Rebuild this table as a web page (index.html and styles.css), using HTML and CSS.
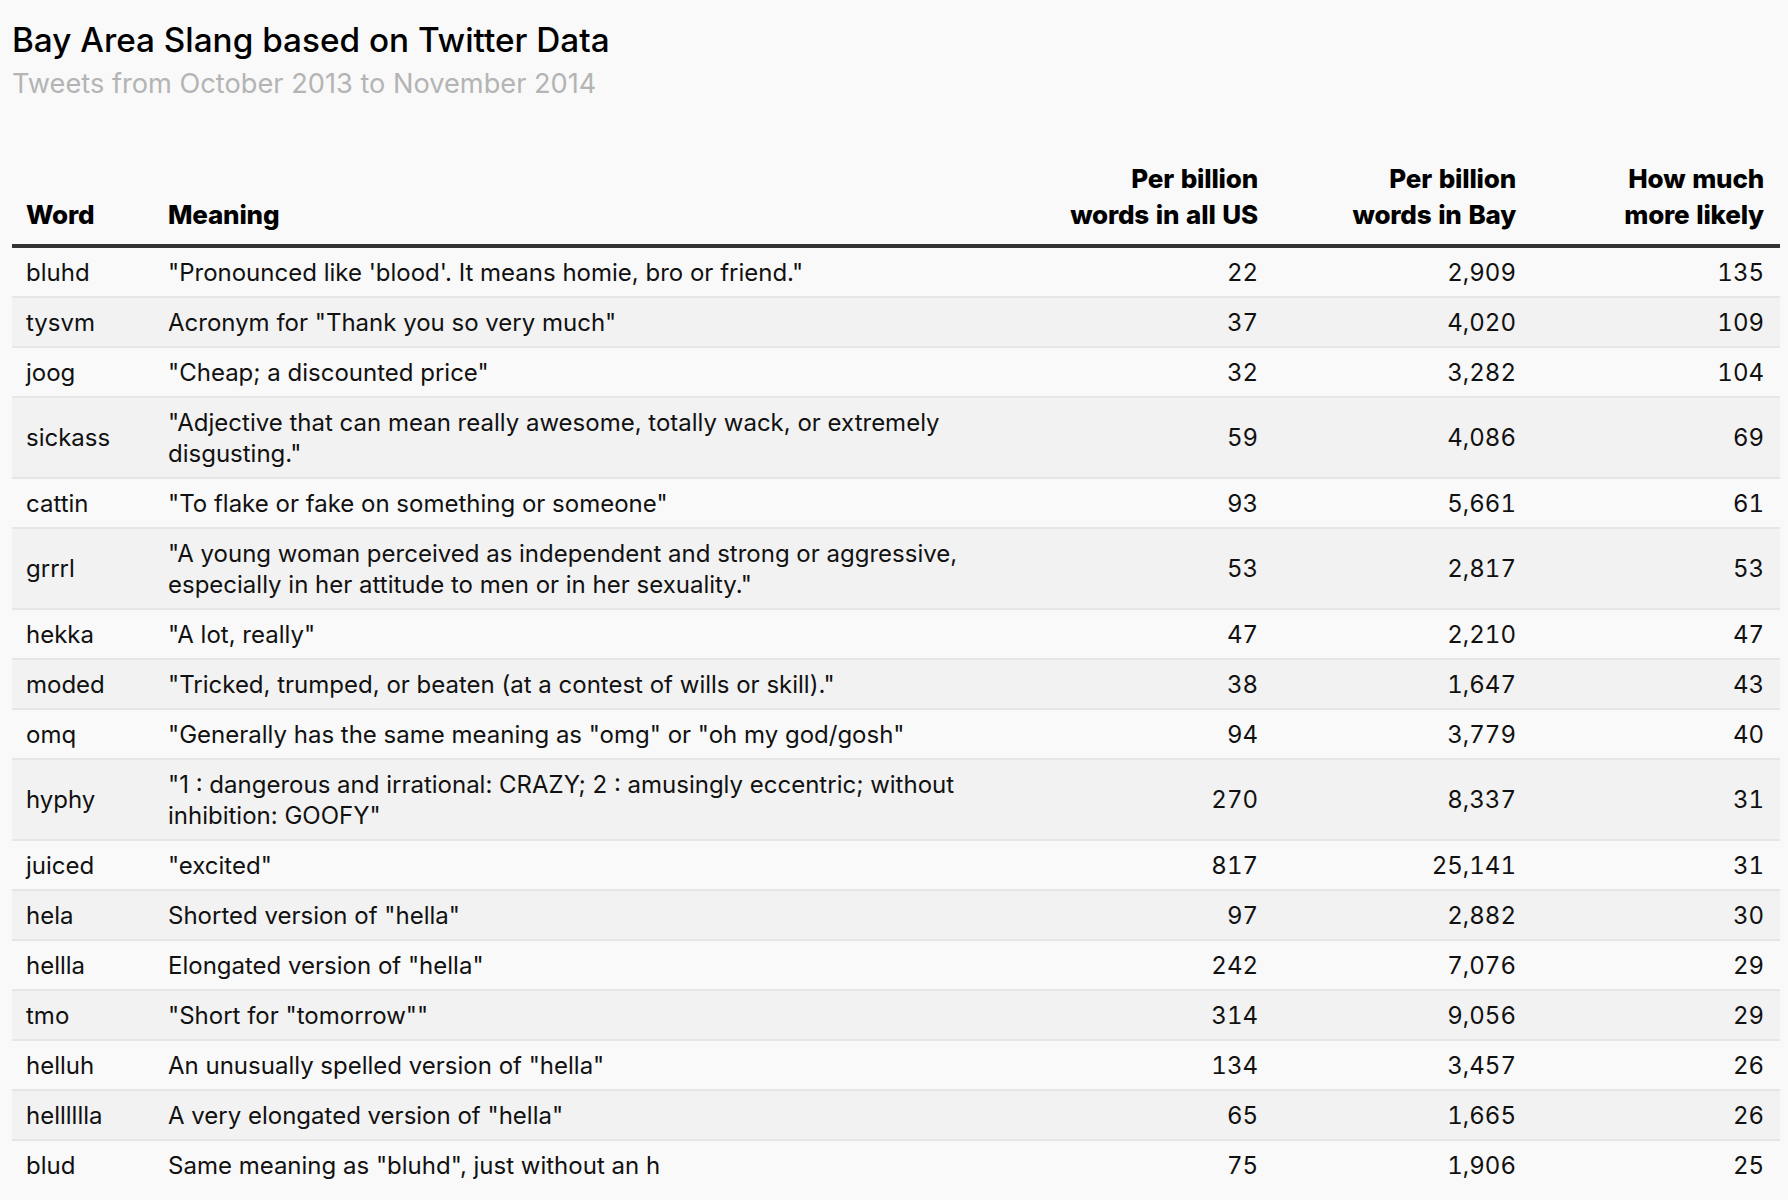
FILE: index.html
```html
<!DOCTYPE html>
<html lang="en">
<head>
<meta charset="utf-8">
<title>Bay Area Slang based on Twitter Data</title>
<link rel="stylesheet" href="styles.css">
</head>
<body>
<div class="page">
  <header class="intro">
    <h1 class="title">Bay Area Slang based on Twitter Data</h1>
    <p class="subtitle">Tweets from October 2013 to November 2014</p>
  </header>
  <table class="slang">
    <colgroup>
      <col class="c-word"><col class="c-meaning"><col class="c-us"><col class="c-bay"><col class="c-more">
    </colgroup>
    <thead>
      <tr>
        <th class="left">Word</th>
        <th class="left">Meaning</th>
        <th class="num">Per billion<br>words in all US</th>
        <th class="num">Per billion<br>words in Bay</th>
        <th class="num">How much<br>more likely</th>
      </tr>
    </thead>
    <tbody>
      <tr><td>bluhd</td><td class="meaning">"Pronounced like 'blood'. It means homie, bro or friend."</td><td class="num">22</td><td class="num">2,909</td><td class="num">135</td></tr>
      <tr><td>tysvm</td><td class="meaning">Acronym for "Thank you so very much"</td><td class="num">37</td><td class="num">4,020</td><td class="num">109</td></tr>
      <tr><td>joog</td><td class="meaning">"Cheap; a discounted price"</td><td class="num">32</td><td class="num">3,282</td><td class="num">104</td></tr>
      <tr><td>sickass</td><td class="meaning">"Adjective that can mean really awesome, totally wack, or extremely disgusting."</td><td class="num">59</td><td class="num">4,086</td><td class="num">69</td></tr>
      <tr><td>cattin</td><td class="meaning">"To flake or fake on something or someone"</td><td class="num">93</td><td class="num">5,661</td><td class="num">61</td></tr>
      <tr><td>grrrl</td><td class="meaning">"A young woman perceived as independent and strong or aggressive, especially in her attitude to men or in her sexuality."</td><td class="num">53</td><td class="num">2,817</td><td class="num">53</td></tr>
      <tr><td>hekka</td><td class="meaning">"A lot, really"</td><td class="num">47</td><td class="num">2,210</td><td class="num">47</td></tr>
      <tr><td>moded</td><td class="meaning">"Tricked, trumped, or beaten (at a contest of wills or skill)."</td><td class="num">38</td><td class="num">1,647</td><td class="num">43</td></tr>
      <tr><td>omq</td><td class="meaning">"Generally has the same meaning as "omg" or "oh my god/gosh"</td><td class="num">94</td><td class="num">3,779</td><td class="num">40</td></tr>
      <tr><td>hyphy</td><td class="meaning">"1 : dangerous and irrational: CRAZY; 2 : amusingly eccentric; without inhibition: GOOFY"</td><td class="num">270</td><td class="num">8,337</td><td class="num">31</td></tr>
      <tr><td>juiced</td><td class="meaning">"excited"</td><td class="num">817</td><td class="num">25,141</td><td class="num">31</td></tr>
      <tr><td>hela</td><td class="meaning">Shorted version of "hella"</td><td class="num">97</td><td class="num">2,882</td><td class="num">30</td></tr>
      <tr><td>hellla</td><td class="meaning">Elongated version of "hella"</td><td class="num">242</td><td class="num">7,076</td><td class="num">29</td></tr>
      <tr><td>tmo</td><td class="meaning">"Short for "tomorrow""</td><td class="num">314</td><td class="num">9,056</td><td class="num">29</td></tr>
      <tr><td>helluh</td><td class="meaning">An unusually spelled version of "hella"</td><td class="num">134</td><td class="num">3,457</td><td class="num">26</td></tr>
      <tr><td>helllllla</td><td class="meaning">A very elongated version of "hella"</td><td class="num">65</td><td class="num">1,665</td><td class="num">26</td></tr>
      <tr><td>blud</td><td class="meaning">Same meaning as "bluhd", just without an h</td><td class="num">75</td><td class="num">1,906</td><td class="num">25</td></tr>
    </tbody>
  </table>
</div>
</body>
</html>
```
FILE: styles.css
```css
html, body {
  margin: 0;
  padding: 0;
  background: #f9f9f9;
}
body {
  font-family: Inter, "Liberation Sans", sans-serif;
  color: #111;
}
.page {
  padding: 20px 8px 0 12px;
}
.intro {
  margin-bottom: 53px;
}
.title {
  margin: 0;
  font-size: 33.3px;
  font-weight: 500;
  line-height: 40px;
  color: #000;
}
.subtitle {
  margin: 8px 0 0 0;
  font-size: 27.2px;
  line-height: 32px;
  color: #b4b4b4;
}
.slang {
  width: 1768px;
  border-collapse: collapse;
  table-layout: fixed;
  font-size: 24px;
}
.c-word { width: 142px; }
.c-meaning { width: 880px; }
.c-us { width: 240px; }
.c-bay { width: 258px; }
.c-more { width: 248px; }
.slang th {
  font-weight: 800;
  font-size: 26px;
  line-height: 36px;
  letter-spacing: -0.2px;
  color: #000;
  vertical-align: bottom;
  padding: 8px 16px 11px 14px;
  border-bottom: 4px solid #333;
}
.slang th.left { text-align: left; }
.slang td {
  padding: 8.5px 16px 8.5px 14px;
  line-height: 31px;
  vertical-align: middle;
  border-bottom: 2px solid #e6e6e6;
  color: #111;
}
.slang td.meaning {
  padding-right: 40px;
}
.slang .num {
  text-align: right;
  font-variant-numeric: tabular-nums;
}
.slang tbody tr:nth-child(even) td {
  background: #f2f2f2;
}
.slang tbody tr:last-child td {
  border-bottom: none;
}
```
